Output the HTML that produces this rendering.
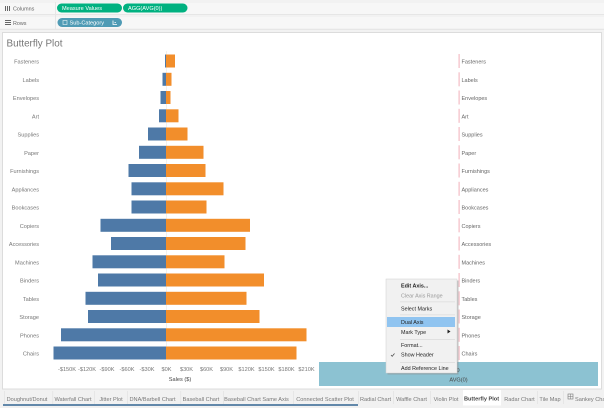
<!DOCTYPE html>
<html><head><meta charset="utf-8"><style>
html,body{margin:0;padding:0;background:#f3f3f3;width:604px;height:408px;overflow:hidden}
svg{display:block;font-family:"Liberation Sans",sans-serif;filter:blur(.3px)}
.l{font-size:5.6px;fill:#777;text-anchor:end}
.r{font-size:5.5px;fill:#666}
.x{font-size:5.6px;fill:#777;text-anchor:middle}
.t{font-size:5.6px;fill:#777;text-anchor:middle}
.m{font-size:5.4px;fill:#222}
</style></head><body>
<svg width="604" height="408" viewBox="0 0 604 408">
<rect width="604" height="408" fill="#f2f2f2"/>
<rect x="0" y="3" width="604" height="11" fill="#f7f7f7"/>
<rect x="0" y="17" width="604" height="11" fill="#f7f7f7"/>
<rect x="0" y="14" width="604" height="1" fill="#e6e6e6"/>
<rect x="0" y="29" width="604" height="1" fill="#e6e6e6"/>
<rect x="55" y="2" width="1" height="27" fill="#e6e6e6"/>
<g fill="#666"><rect x="5" y="6" width="1" height="5"/><rect x="7" y="6" width="1" height="5"/><rect x="9" y="6" width="1" height="5"/>
<rect x="5" y="20" width="6" height="1"/><rect x="5" y="22" width="6" height="1"/><rect x="5" y="24" width="6" height="1"/></g>
<text x="13" y="10.500" font-size="5.4" fill="#666">Columns</text>
<text x="13" y="25" font-size="5.4" fill="#666">Rows</text>
<rect x="57" y="3.500" width="65" height="9" rx="4.500" fill="#00b180"/>
<rect x="123" y="3.500" width="64.500" height="9" rx="4.500" fill="#00b180"/>
<rect x="57.500" y="18" width="64.500" height="9" rx="4.500" fill="#4f9bb5"/>
<text x="62" y="10" font-size="5.6" fill="#fff">Measure Values</text>
<text x="128" y="10" font-size="5.6" fill="#fff">AGG(AVG(0))</text>
<rect x="63" y="20.500" width="4" height="4" fill="none" stroke="#d5e8ee" stroke-width=".7"/>
<text x="69.500" y="24.500" font-size="5.6" fill="#fff">Sub-Category</text>
<path d="M113 20.500v4h4M114.500 22.500h1.500" stroke="#fff" stroke-width=".8" fill="none"/>
<rect x="2.500" y="32.500" width="599" height="356.500" fill="#fff" stroke="#dcdcdc"/>
<text x="6.500" y="46.500" font-size="9.900" fill="#777">Butterfly Plot</text>
<rect x="166" y="51" width=".6" height="306" fill="#e6e6e6"/>
<g fill="#4e79a7">
<rect x="165" y="54.500" width="1" height="13"/><rect x="162.500" y="72.800" width="3.500" height="13"/><rect x="160.500" y="91" width="5.500" height="13"/><rect x="159" y="109.300" width="7" height="13"/><rect x="148" y="127.500" width="18" height="13"/><rect x="139" y="145.800" width="27" height="13"/><rect x="128.500" y="164" width="37.500" height="13"/><rect x="131.500" y="182.300" width="34.500" height="13"/><rect x="131.500" y="200.500" width="34.500" height="13"/><rect x="100.500" y="218.800" width="65.500" height="13"/><rect x="111" y="237" width="55" height="13"/><rect x="92.500" y="255.300" width="73.500" height="13"/><rect x="98" y="273.500" width="68" height="13"/><rect x="85.500" y="291.800" width="80.500" height="13"/><rect x="88" y="310" width="78" height="13"/><rect x="61" y="328.300" width="105" height="13"/><rect x="53.500" y="346.500" width="112.500" height="13"/>
</g>
<g fill="#f28e2b">
<rect x="166" y="54.500" width="9" height="13"/><rect x="166" y="72.800" width="5.500" height="13"/><rect x="166" y="91" width="4.500" height="13"/><rect x="166" y="109.300" width="12.500" height="13"/><rect x="166" y="127.500" width="21.500" height="13"/><rect x="166" y="145.800" width="37.500" height="13"/><rect x="166" y="164" width="39.500" height="13"/><rect x="166" y="182.300" width="57.500" height="13"/><rect x="166" y="200.500" width="40.500" height="13"/><rect x="166" y="218.800" width="84" height="13"/><rect x="166" y="237" width="79.500" height="13"/><rect x="166" y="255.300" width="58.500" height="13"/><rect x="166" y="273.500" width="98" height="13"/><rect x="166" y="291.800" width="80.500" height="13"/><rect x="166" y="310" width="93.500" height="13"/><rect x="166" y="328.300" width="140.500" height="13"/><rect x="166" y="346.500" width="130.500" height="13"/>
</g>
<g fill="#f7d0d6">
<rect x="458.300" y="54" width="1.700" height="14"/><rect x="458.300" y="72.300" width="1.700" height="14"/><rect x="458.300" y="90.500" width="1.700" height="14"/><rect x="458.300" y="108.800" width="1.700" height="14"/><rect x="458.300" y="127" width="1.700" height="14"/><rect x="458.300" y="145.300" width="1.700" height="14"/><rect x="458.300" y="163.500" width="1.700" height="14"/><rect x="458.300" y="181.800" width="1.700" height="14"/><rect x="458.300" y="200" width="1.700" height="14"/><rect x="458.300" y="218.300" width="1.700" height="14"/><rect x="458.300" y="236.500" width="1.700" height="14"/><rect x="458.300" y="254.800" width="1.700" height="14"/><rect x="458.300" y="273" width="1.700" height="14"/><rect x="458.300" y="291.300" width="1.700" height="14"/><rect x="458.300" y="309.500" width="1.700" height="14"/><rect x="458.300" y="327.800" width="1.700" height="14"/><rect x="458.300" y="346" width="1.700" height="14"/>
</g>
<g class="l">
<text x="39" y="63.500">Fasteners</text><text x="39" y="81.800">Labels</text><text x="39" y="100">Envelopes</text><text x="39" y="118.300">Art</text><text x="39" y="136.500">Supplies</text><text x="39" y="154.800">Paper</text><text x="39" y="173">Furnishings</text><text x="39" y="191.300">Appliances</text><text x="39" y="209.500">Bookcases</text><text x="39" y="227.800">Copiers</text><text x="39" y="246">Accessories</text><text x="39" y="264.300">Machines</text><text x="39" y="282.500">Binders</text><text x="39" y="300.800">Tables</text><text x="39" y="319">Storage</text><text x="39" y="337.300">Phones</text><text x="39" y="355.500">Chairs</text>
</g>
<g class="r">
<text x="461.500" y="63.500">Fasteners</text><text x="461.500" y="81.800">Labels</text><text x="461.500" y="100">Envelopes</text><text x="461.500" y="118.300">Art</text><text x="461.500" y="136.500">Supplies</text><text x="461.500" y="154.800">Paper</text><text x="461.500" y="173">Furnishings</text><text x="461.500" y="191.300">Appliances</text><text x="461.500" y="209.500">Bookcases</text><text x="461.500" y="227.800">Copiers</text><text x="461.500" y="246">Accessories</text><text x="461.500" y="264.300">Machines</text><text x="461.500" y="282.500">Binders</text><text x="461.500" y="300.800">Tables</text><text x="461.500" y="319">Storage</text><text x="461.500" y="337.300">Phones</text><text x="461.500" y="355.500">Chairs</text>
</g>
<g class="x">
<text x="67" y="371">-$150K</text><text x="87" y="371">-$120K</text><text x="107" y="371">-$90K</text><text x="127" y="371">-$60K</text><text x="147" y="371">-$30K</text><text x="166.500" y="371">$0K</text><text x="186.500" y="371">$30K</text><text x="206.500" y="371">$60K</text><text x="226.500" y="371">$90K</text><text x="246.500" y="371">$120K</text><text x="266.500" y="371">$150K</text><text x="286.500" y="371">$180K</text><text x="306.500" y="371">$210K</text>
</g>
<text x="180" y="381" font-size="5.6" fill="#444" text-anchor="middle">Sales ($)</text>
<rect x="319" y="362" width="279" height="24" fill="#8cc2d2"/>
<text x="458" y="372" font-size="5.6" fill="#444" text-anchor="middle">0</text>
<text x="458.500" y="381.500" font-size="5.6" fill="#444" text-anchor="middle">AVG(0)</text>
<!-- tabs -->
<rect x="0" y="389.500" width="604" height="18.500" fill="#f1f1f1"/>
<rect x="3" y="404" width="355" height="2" fill="#6288aa"/>
<rect x="463" y="390" width="38" height="15.500" fill="#fff"/>
<g fill="#e0e0e0"><rect x="4" y="391" width=".6" height="13"/><rect x="52.500" y="391" width=".6" height="13"/><rect x="94" y="391" width=".6" height="13"/><rect x="127" y="391" width=".6" height="13"/><rect x="180.500" y="391" width=".6" height="13"/><rect x="223" y="391" width=".6" height="13"/><rect x="293" y="391" width=".6" height="13"/><rect x="358" y="391" width=".6" height="13"/><rect x="393" y="391" width=".6" height="13"/><rect x="430" y="391" width=".6" height="13"/><rect x="537" y="391" width=".6" height="13"/><rect x="563" y="391" width=".6" height="13"/></g>
<g class="t">
<text x="27" y="401">Doughnut/Donut</text><text x="73" y="401">Waterfall Chart</text><text x="111" y="401">Jitter Plot</text><text x="152.500" y="401">DNA/Barbell Chart</text><text x="201" y="401">Baseball Chart</text><text x="256.500" y="401">Baseball Chart Same Axis</text><text x="325" y="401">Connected Scatter Plot</text><text x="375.500" y="401">Radial Chart</text><text x="411.500" y="401">Waffle Chart</text><text x="446" y="401">Violin Plot</text>
<text x="481.500" y="400.500" font-weight="bold" fill="#444" style="fill:#444">Butterfly Plot</text>
<text x="519.500" y="401">Radar Chart</text><text x="550" y="401">Tile Map</text>
</g>
<rect x="568" y="394" width="5" height="5" fill="none" stroke="#777" stroke-width=".6"/><path d="M570.500 394v5M568 396.500h5" stroke="#777" stroke-width=".5"/>
<text x="575" y="401" font-size="5.6" fill="#777">Sankey Chart</text>
<!-- menu -->
<rect x="387.500" y="280.500" width="71" height="94" fill="#888" opacity=".5"/>
<rect x="386" y="279" width="71" height="94" fill="#f1f1f1" stroke="#d0d0d0" stroke-width=".5"/>
<rect x="387" y="317" width="68" height="10" fill="#90c4f0"/>
<g fill="#dadada"><rect x="400" y="301.500" width="55" height=".7"/><rect x="400" y="314.500" width="55" height=".7"/><rect x="400" y="339" width="55" height=".7"/><rect x="400" y="362" width="55" height=".7"/></g>
<g class="m">
<text x="401" y="287.500" font-weight="bold">Edit Axis...</text>
<text x="401" y="297.500" style="fill:#999">Clear Axis Range</text>
<text x="401" y="310.500">Select Marks</text>
<text x="401" y="324">Dual Axis</text>
<text x="401" y="334">Mark Type</text>
<text x="401" y="347">Format...</text>
<text x="401" y="356.500">Show Header</text>
<text x="401" y="370">Add Reference Line</text>
</g>
<path d="M447.500 329.500l3 2-3 2z" fill="#222"/>
<path d="M391 355l1.200 1.300 2.300-2.800" stroke="#444" stroke-width=".7" fill="none"/>
</svg>
</body></html>
